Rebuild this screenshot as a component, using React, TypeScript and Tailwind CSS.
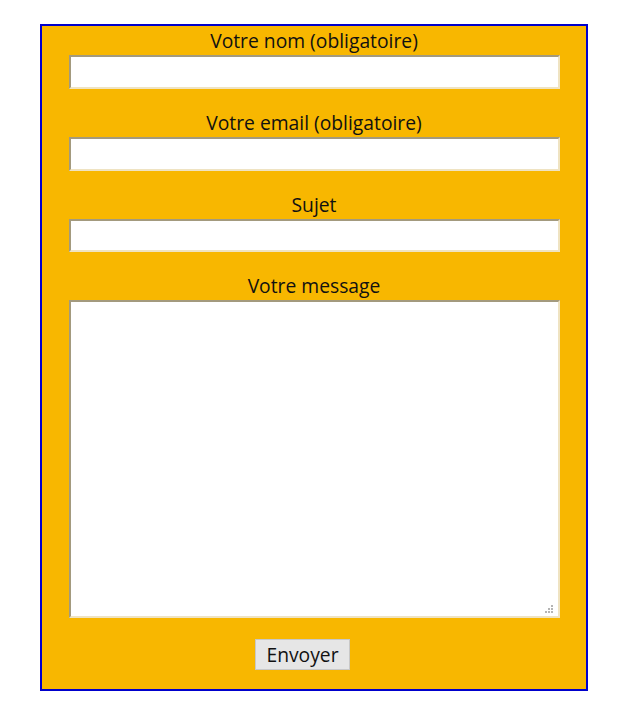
export default function App() {
  const fields = [
    { label: "Votre nom (obligatoire)", h: "h-[34px]" },
    { label: "Votre email (obligatoire)", h: "h-[34px]" },
    { label: "Sujet", h: "h-[33px]" },
  ];

  return (
    <div className="min-h-[709px] bg-white pl-[40px] pt-[24px] font-['Open_Sans',sans-serif] text-[#111]">
      <form className="box-border flex h-[667px] w-[548px] flex-col border-2 border-[#0000cc] bg-[#f8b700] px-[27px] pt-[3px]">
        {fields.map((f) => (
          <div key={f.label} className="mb-[22px] flex flex-col">
            <label className="pb-[2px] text-center text-[19.3px] leading-[24px]">{f.label}</label>
            <input
              type="text"
              className={`${f.h} w-[491px] border-2 border-t-[#a39a7e] border-l-[#a39a7e] border-b-[#efe3c2] border-r-[#efe3c2] bg-white outline-none`}
            />
          </div>
        ))}
        <div className="flex flex-col">
          <label className="pb-[2px] text-center text-[19.3px] leading-[24px]">Votre message</label>
          <div className="relative">
            <textarea className="block h-[318px] w-[491px] resize-none border-2 border-t-[#a39a7e] border-l-[#a39a7e] border-b-[#efe3c2] border-r-[#efe3c2] bg-white outline-none" />
            <svg className="absolute bottom-[4px] right-[5px]" width="9" height="9" viewBox="0 0 9 9">
              <g fill="#b4b4b4">
                <rect x="6" y="0" width="2" height="2" />
                <rect x="3" y="3" width="2" height="2" />
                <rect x="6" y="3" width="2" height="2" />
                <rect x="0" y="6" width="2" height="2" />
                <rect x="3" y="6" width="2" height="2" />
                <rect x="6" y="6" width="2" height="2" />
              </g>
            </svg>
          </div>
        </div>
        <div className="mt-[21px] pl-[186px]">
          <button
            type="button"
            className="h-[31px] w-[95px] border border-[#c8c8c8] bg-[#e6e6e6] text-[19.3px] leading-[26px] text-[#111]"
          >
            Envoyer
          </button>
        </div>
      </form>
    </div>
  );
}
